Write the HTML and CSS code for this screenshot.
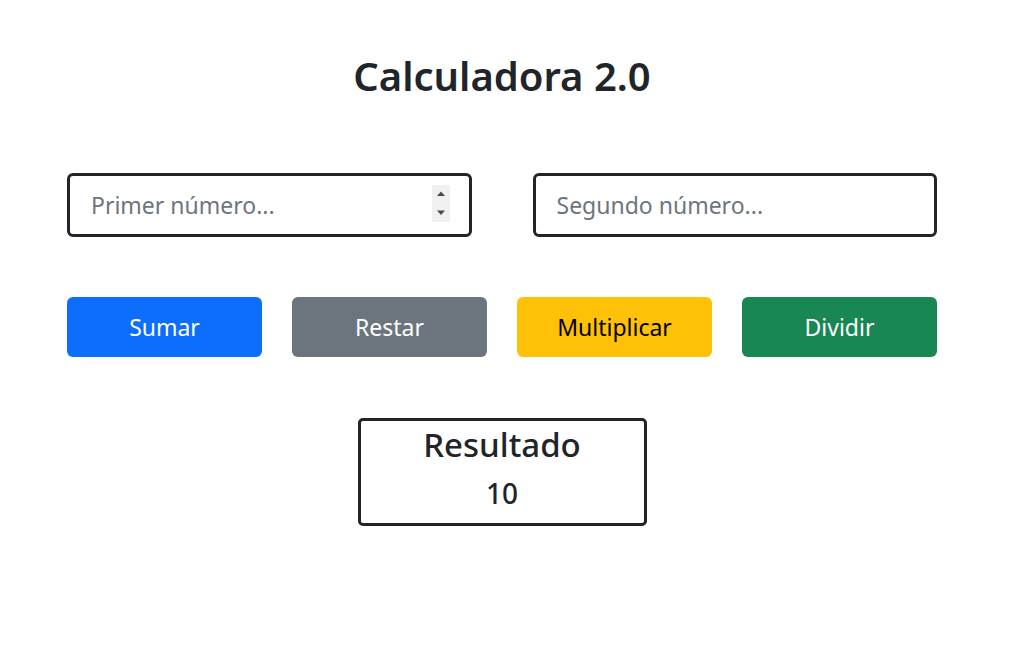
FILE: index.html
```html
<!DOCTYPE html>
<html lang="es">
<head>
<meta charset="utf-8">
<title>Calculadora 2.0</title>
<link rel="stylesheet" href="styles.css">
</head>
<body>
<main class="page">
  <h1 class="title">Calculadora 2.0</h1>
  <div class="inputs">
    <div class="field">
      <input class="num" type="text" placeholder="Primer número...">
      <span class="spin" aria-hidden="true">
        <svg width="18" height="37" viewBox="0 0 18 37"><path d="M5 11 L9 6.5 L13 11 Z" fill="#4a4a4a"/><path d="M5 25.5 L13 25.5 L9 30 Z" fill="#4a4a4a"/></svg>
      </span>
    </div>
    <div class="field">
      <input class="num" type="text" placeholder="Segundo número...">
    </div>
  </div>
  <div class="buttons">
    <button class="btn btn-blue">Sumar</button>
    <button class="btn btn-gray">Restar</button>
    <button class="btn btn-yellow">Multiplicar</button>
    <button class="btn btn-green">Dividir</button>
  </div>
  <div class="result-wrap">
    <div class="result">
      <div class="result-label">Resultado</div>
      <div class="result-value">10</div>
    </div>
  </div>
</main>
</body>
</html>
```
FILE: styles.css
```css
* { box-sizing: border-box; }
html, body { margin: 0; background: #fff; }
body {
  padding-right: 10px;
  font-family: "Noto Sans", "Open Sans", sans-serif;
  color: #212529;
}
.page {
  width: 870px;
  margin: 0 auto;
  padding-top: 50px;
}
.title {
  margin: 0;
  text-align: center;
  font-size: 40px;
  font-weight: 600;
  line-height: 52px;
}
.inputs {
  display: flex;
  gap: 61px;
  margin-top: 71px;
}
.field {
  position: relative;
  flex: 1;
}
.num {
  width: 100%;
  height: 64px;
  border: 3px solid #212529;
  border-radius: 6px;
  padding: 0 21px;
  font-family: inherit;
  font-size: 23px;
  color: #212529;
  outline: none;
  background: #fff;
}
.num::placeholder { color: #6c757d; }
.spin {
  position: absolute;
  top: 12px;
  right: 22px;
  width: 18px;
  height: 37px;
  background: #f0f0f0;
  display: flex;
}
.buttons {
  display: flex;
  gap: 30px;
  margin-top: 60px;
}
.btn {
  flex: 1;
  height: 60px;
  border: none;
  border-radius: 6px;
  font-family: inherit;
  font-size: 23px;
  color: #fff;
  padding: 0;
}
.btn-blue { background: #0d6efd; }
.btn-gray { background: #6c757d; }
.btn-yellow { background: #ffc107; color: #000; }
.btn-green { background: #198754; }
.result-wrap {
  display: flex;
  justify-content: center;
  margin-top: 61px;
}
.result {
  width: 289px;
  height: 108px;
  border: 3px solid #212529;
  border-radius: 5px;
  text-align: center;
  padding-top: 0;
}
.result-label {
  font-size: 33px;
  font-weight: 500;
  line-height: 48px;
}
.result-value {
  font-size: 28px;
  font-weight: 500;
  line-height: 48px;
}
```
